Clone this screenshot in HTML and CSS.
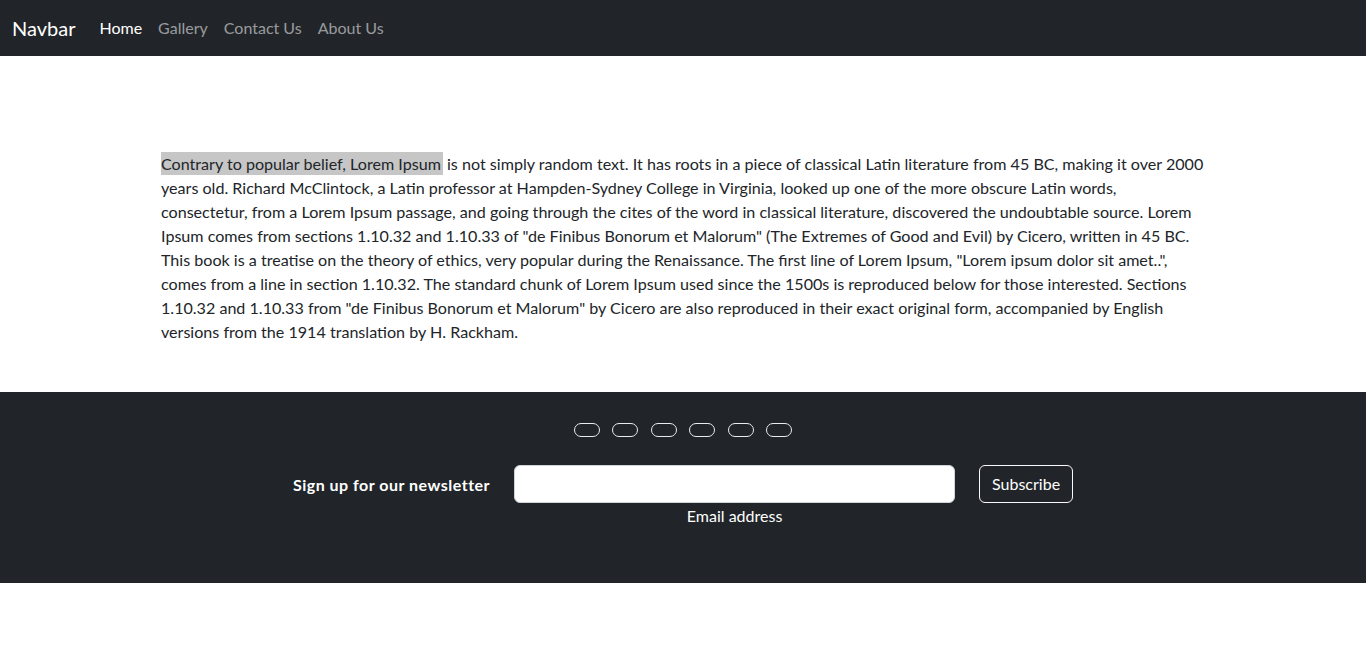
FILE: index.html
```html
<!DOCTYPE html>
<html lang="en">
<head>
<meta charset="utf-8">
<title>Navbar</title>
<link rel="stylesheet" href="styles.css">
</head>
<body>
<nav class="navbar">
  <a class="brand" href="#">Navbar</a>
  <ul class="nav">
    <li><a class="nav-link active" href="#">Home</a></li>
    <li><a class="nav-link" href="#">Gallery</a></li>
    <li><a class="nav-link" href="#">Contact Us</a></li>
    <li><a class="nav-link" href="#">About Us</a></li>
  </ul>
</nav>

<main class="content">
  <p class="lead-text"><span class="hl">Contrary to popular belief, Lorem Ipsum</span> is not simply random text. It has roots in a piece of classical Latin literature from 45 BC, making it over 2000 years old. Richard McClintock, a Latin professor at Hampden-Sydney College in Virginia, looked up one of the more obscure Latin words, consectetur, from a Lorem Ipsum passage, and going through the cites of the word in classical literature, discovered the undoubtable source. Lorem Ipsum comes from sections 1.10.32 and 1.10.33 of "de Finibus Bonorum et Malorum" (The Extremes of Good and Evil) by Cicero, written in 45 BC. This book is a treatise on the theory of ethics, very popular during the Renaissance. The first line of Lorem Ipsum, "Lorem ipsum dolor sit amet..", comes from a line in section 1.10.32. The standard chunk of Lorem Ipsum used since the 1500s is reproduced below for those interested. Sections 1.10.32 and 1.10.33 from "de Finibus Bonorum et Malorum" by Cicero are also reproduced in their exact original form, accompanied by English versions from the 1914 translation by H. Rackham.</p>
</main>

<footer class="footer">
  <div class="social">
    <a class="btn-floating" href="#"></a>
    <a class="btn-floating" href="#"></a>
    <a class="btn-floating" href="#"></a>
    <a class="btn-floating" href="#"></a>
    <a class="btn-floating" href="#"></a>
    <a class="btn-floating" href="#"></a>
  </div>
  <form class="newsletter">
    <p class="news-label">Sign up for our newsletter</p>
    <div class="field">
      <input class="email-input" type="email" id="email">
      <label class="email-label" for="email">Email address</label>
    </div>
    <button class="btn-subscribe" type="button">Subscribe</button>
  </form>
</footer>
</body>
</html>
```

FILE: styles.css
```css
* { box-sizing: border-box; }

body {
  margin: 0;
  font-family: Lato, "Open Sans", sans-serif;
  font-size: 16px;
  line-height: 24px;
  color: #212529;
  background: #fff;
}

a { text-decoration: none; }

.navbar {
  height: 56px;
  background: #212529;
  display: flex;
  align-items: center;
  padding: 0 12px;
}

.brand {
  color: #fff;
  font-size: 20px;
  line-height: 30px;
  margin-right: 16px;
}

.nav {
  list-style: none;
  display: flex;
  margin: 0;
  padding: 0;
}

.nav-link {
  display: block;
  padding: 8px;
  color: rgba(255, 255, 255, 0.55);
}

.nav-link.active { color: #fff; }

.content {
  width: 1044px;
  margin: 0 auto;
  padding: 96px 0 48px;
}

.lead-text {
  margin: 0;
  font-size: 16.1px;
  line-height: 24px;
}

.hl {
  background: #c6c6c6;
  padding: 2px 2px 2px 0;
}

.footer {
  background: #212529;
  color: #fff;
  height: 191px;
  padding-top: 31px;
}

.social {
  display: flex;
  justify-content: center;
  gap: 12.4px;
}

.btn-floating {
  display: block;
  width: 26px;
  height: 14px;
  border: 1px solid #e9ecef;
  border-radius: 7px;
}

.newsletter {
  display: flex;
  justify-content: center;
  align-items: flex-start;
  gap: 24px;
  margin-top: 28px;
}

.news-label {
  margin: 0;
  font-weight: 700;
  line-height: 40px;
  letter-spacing: 0.5px;
}

.field {
  display: flex;
  flex-direction: column;
  align-items: center;
  width: 441px;
}

.email-input {
  width: 100%;
  height: 38px;
  border: 1px solid #ced4da;
  border-radius: 6px;
  background: #fff;
  font: inherit;
  padding: 6px 12px;
}

.email-label {
  display: block;
  line-height: 24px;
  margin-top: 1px;
}

.btn-subscribe {
  height: 38px;
  width: 94px;
  padding: 0;
  background: transparent;
  border: 1px solid #f8f9fa;
  border-radius: 6px;
  color: #fff;
  font: inherit;
}
```
